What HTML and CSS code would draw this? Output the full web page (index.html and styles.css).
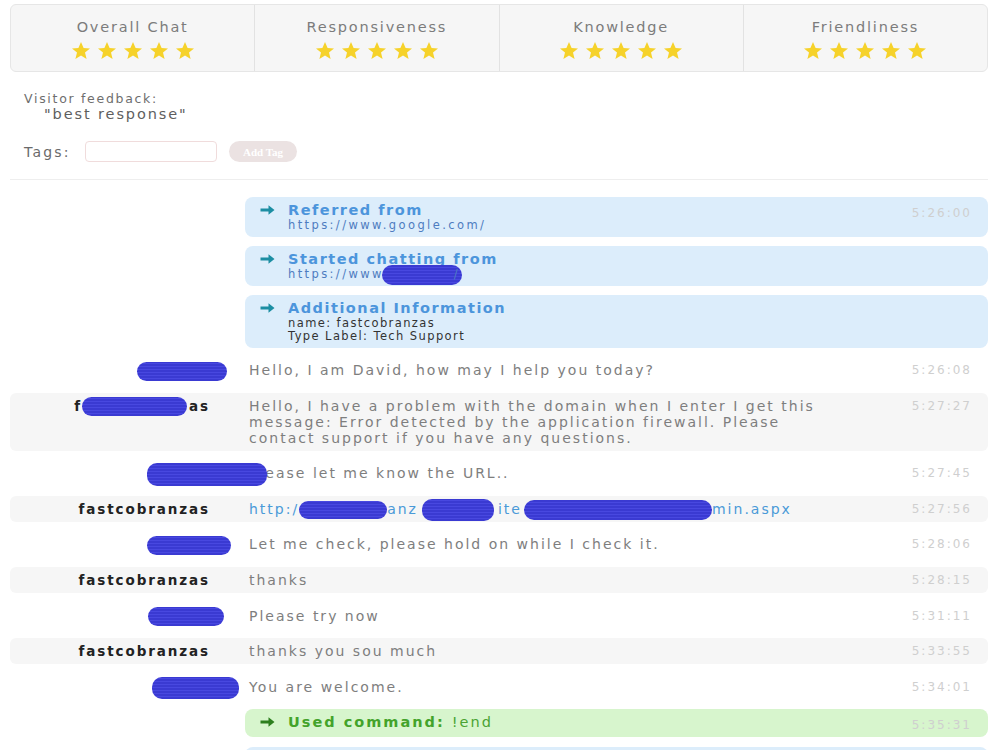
FILE: index.html
```html
<!DOCTYPE html>
<html lang="en">
  <head>
    <meta charset="UTF-8" />
    <meta name="viewport" content="width=device-width, initial-scale=1.0" />
    <title>Chat Transcript</title>
    <link rel="stylesheet" href="styles.css">
  </head>
  <body>
    <div class="page">
      <div class="ratings">
        <div class="rating">
          <div class="rating-title">Overall Chat</div>
          <div class="stars">
            <svg viewBox="0 0 20 20"><polygon points="10,1 12.6,7 19,7.4 14,11.6 15.6,18 10,14.5 4.4,18 6,11.6 1,7.4 7.4,7"/></svg>
            <svg viewBox="0 0 20 20"><polygon points="10,1 12.6,7 19,7.4 14,11.6 15.6,18 10,14.5 4.4,18 6,11.6 1,7.4 7.4,7"/></svg>
            <svg viewBox="0 0 20 20"><polygon points="10,1 12.6,7 19,7.4 14,11.6 15.6,18 10,14.5 4.4,18 6,11.6 1,7.4 7.4,7"/></svg>
            <svg viewBox="0 0 20 20"><polygon points="10,1 12.6,7 19,7.4 14,11.6 15.6,18 10,14.5 4.4,18 6,11.6 1,7.4 7.4,7"/></svg>
            <svg viewBox="0 0 20 20"><polygon points="10,1 12.6,7 19,7.4 14,11.6 15.6,18 10,14.5 4.4,18 6,11.6 1,7.4 7.4,7"/></svg>
          </div>
        </div>
        <div class="rating">
          <div class="rating-title">Responsiveness</div>
          <div class="stars">
            <svg viewBox="0 0 20 20"><polygon points="10,1 12.6,7 19,7.4 14,11.6 15.6,18 10,14.5 4.4,18 6,11.6 1,7.4 7.4,7"/></svg>
            <svg viewBox="0 0 20 20"><polygon points="10,1 12.6,7 19,7.4 14,11.6 15.6,18 10,14.5 4.4,18 6,11.6 1,7.4 7.4,7"/></svg>
            <svg viewBox="0 0 20 20"><polygon points="10,1 12.6,7 19,7.4 14,11.6 15.6,18 10,14.5 4.4,18 6,11.6 1,7.4 7.4,7"/></svg>
            <svg viewBox="0 0 20 20"><polygon points="10,1 12.6,7 19,7.4 14,11.6 15.6,18 10,14.5 4.4,18 6,11.6 1,7.4 7.4,7"/></svg>
            <svg viewBox="0 0 20 20"><polygon points="10,1 12.6,7 19,7.4 14,11.6 15.6,18 10,14.5 4.4,18 6,11.6 1,7.4 7.4,7"/></svg>
          </div>
        </div>
        <div class="rating">
          <div class="rating-title">Knowledge</div>
          <div class="stars">
            <svg viewBox="0 0 20 20"><polygon points="10,1 12.6,7 19,7.4 14,11.6 15.6,18 10,14.5 4.4,18 6,11.6 1,7.4 7.4,7"/></svg>
            <svg viewBox="0 0 20 20"><polygon points="10,1 12.6,7 19,7.4 14,11.6 15.6,18 10,14.5 4.4,18 6,11.6 1,7.4 7.4,7"/></svg>
            <svg viewBox="0 0 20 20"><polygon points="10,1 12.6,7 19,7.4 14,11.6 15.6,18 10,14.5 4.4,18 6,11.6 1,7.4 7.4,7"/></svg>
            <svg viewBox="0 0 20 20"><polygon points="10,1 12.6,7 19,7.4 14,11.6 15.6,18 10,14.5 4.4,18 6,11.6 1,7.4 7.4,7"/></svg>
            <svg viewBox="0 0 20 20"><polygon points="10,1 12.6,7 19,7.4 14,11.6 15.6,18 10,14.5 4.4,18 6,11.6 1,7.4 7.4,7"/></svg>
          </div>
        </div>
        <div class="rating">
          <div class="rating-title">Friendliness</div>
          <div class="stars">
            <svg viewBox="0 0 20 20"><polygon points="10,1 12.6,7 19,7.4 14,11.6 15.6,18 10,14.5 4.4,18 6,11.6 1,7.4 7.4,7"/></svg>
            <svg viewBox="0 0 20 20"><polygon points="10,1 12.6,7 19,7.4 14,11.6 15.6,18 10,14.5 4.4,18 6,11.6 1,7.4 7.4,7"/></svg>
            <svg viewBox="0 0 20 20"><polygon points="10,1 12.6,7 19,7.4 14,11.6 15.6,18 10,14.5 4.4,18 6,11.6 1,7.4 7.4,7"/></svg>
            <svg viewBox="0 0 20 20"><polygon points="10,1 12.6,7 19,7.4 14,11.6 15.6,18 10,14.5 4.4,18 6,11.6 1,7.4 7.4,7"/></svg>
            <svg viewBox="0 0 20 20"><polygon points="10,1 12.6,7 19,7.4 14,11.6 15.6,18 10,14.5 4.4,18 6,11.6 1,7.4 7.4,7"/></svg>
          </div>
        </div>
      </div>

      <div class="feedback">
        <div class="feedback-label">Visitor feedback:</div>
        <div class="feedback-text">"best response"</div>
      </div>

      <div class="tags">
        <label for="tag">Tags:</label>
        <input type="text" id="tag" />
        <button class="add-tag">Add Tag</button>
      </div>

      <div class="chat">
        <div class="info">
          <svg class="arrow" viewBox="0 0 16 12"><path d="M1 4.6h8V1.2l6 4.8-6 4.8V7.4H1z" /></svg>
          <div class="info-body">
            <div class="info-title">Referred from</div>
            <div class="info-line">https://www.google.com/</div>
          </div>
          <div class="time">5:26:00</div>
        </div>
        <div class="info">
          <svg class="arrow" viewBox="0 0 16 12"><path d="M1 4.6h8V1.2l6 4.8-6 4.8V7.4H1z" /></svg>
          <div class="info-body">
            <div class="info-title">Started chatting from</div>
            <div class="info-line">https://www<span class="blot blot-url"></span>/</div>
          </div>
          <div class="time"></div>
        </div>
        <div class="info">
          <svg class="arrow" viewBox="0 0 16 12"><path d="M1 4.6h8V1.2l6 4.8-6 4.8V7.4H1z" /></svg>
          <div class="info-body">
            <div class="info-title">Additional Information</div>
            <div class="info-line dark">name: fastcobranzas</div>
            <div class="info-line dark">Type Label: Tech Support</div>
          </div>
          <div class="time"></div>
        </div>

        <div class="msg">
          <div class="name"><span class="blot blot-a"></span></div>
          <div class="text">Hello, I am David, how may I help you today?</div>
          <div class="time">5:26:08</div>
        </div>
        <div class="msg visitor">
          <div class="name">f<span class="blot blot-v"></span>as</div>
          <div class="text">Hello, I have a problem with the domain when I enter I get this message: Error detected by the application firewall. Please contact support if you have any questions.</div>
          <div class="time">5:27:27</div>
        </div>
        <div class="msg">
          <div class="name"><span class="blot blot-b"></span></div>
          <div class="text">Please let me know the URL..</div>
          <div class="time">5:27:45</div>
        </div>
        <div class="msg visitor">
          <div class="name">fastcobranzas</div>
          <div class="text link">http:/<span class="blot blot-l1"></span>anz<span class="blot blot-l2"></span>ite<span class="blot blot-l3"></span>min.aspx</div>
          <div class="time">5:27:56</div>
        </div>
        <div class="msg">
          <div class="name"><span class="blot blot-c"></span></div>
          <div class="text">Let me check, please hold on while I check it.</div>
          <div class="time">5:28:06</div>
        </div>
        <div class="msg visitor">
          <div class="name">fastcobranzas</div>
          <div class="text">thanks</div>
          <div class="time">5:28:15</div>
        </div>
        <div class="msg">
          <div class="name"><span class="blot blot-d"></span></div>
          <div class="text">Please try now</div>
          <div class="time">5:31:11</div>
        </div>
        <div class="msg visitor">
          <div class="name">fastcobranzas</div>
          <div class="text">thanks you sou much</div>
          <div class="time">5:33:55</div>
        </div>
        <div class="msg">
          <div class="name"><span class="blot blot-e"></span></div>
          <div class="text">You are welcome.</div>
          <div class="time">5:34:01</div>
        </div>

        <div class="info command">
          <svg class="arrow" viewBox="0 0 16 12"><path d="M1 4.6h8V1.2l6 4.8-6 4.8V7.4H1z" /></svg>
          <div class="info-body">
            <div class="info-title">Used command: <span class="plain">!end</span></div>
          </div>
          <div class="time">5:35:31</div>
        </div>
        <div class="info last">
          <div class="info-body"></div>
        </div>
      </div>
    </div>
  </body>
</html>
```

FILE: styles.css
```css
body {
  margin: 0;
  font-family: "DejaVu Sans", "Liberation Sans", sans-serif;
  background-color: #ffffff;
  color: #7a7a7a;
}
.page {
  width: 978px;
  margin-left: 10px;
  padding-top: 4px;
}

/* ratings */
.ratings {
  display: flex;
  background-color: #f6f6f6;
  border: 1px solid #e6e6e6;
  border-radius: 6px;
  height: 66px;
}
.rating {
  flex: 1;
  text-align: center;
  border-left: 1px solid #e2e2e2;
  padding-top: 13px;
  box-sizing: border-box;
}
.rating:first-child {
  border-left: none;
}
.rating-title {
  font-size: 14.5px;
  letter-spacing: 1.8px;
  color: #7c7c7c;
  line-height: 18px;
}
.stars {
  display: flex;
  justify-content: center;
  gap: 6px;
  margin-top: 5px;
}
.stars svg {
  width: 20px;
  height: 20px;
  fill: #f6d22a;
}

/* feedback */
.feedback {
  margin-top: 19px;
  padding-left: 14px;
}
.feedback-label {
  font-size: 12.5px;
  line-height: 15px;
  color: #6e6e6e;
  letter-spacing: 1.7px;
}
.feedback-text {
  font-size: 14.5px;
  line-height: 16px;
  padding-left: 20px;
  color: #5e5e5e;
  letter-spacing: 1.9px;
}

.tags {
  display: flex;
  align-items: center;
  margin-top: 19px;
  padding-left: 14px;
  height: 21px;
}
.tags label {
  font-size: 14px;
  color: #6a6a6a;
  letter-spacing: 2.2px;
  width: 61px;
}
.tags input {
  width: 132px;
  height: 21px;
  box-sizing: border-box;
  border: 1px solid #f0dcdc;
  border-radius: 4px;
  padding: 0 4px;
}
.add-tag {
  margin-left: 12px;
  width: 68px;
  height: 21px;
  border: none;
  border-radius: 11px;
  background-color: #ebe2e2;
  color: #ffffff;
  font-family: "Liberation Serif", serif;
  font-weight: bold;
  font-size: 11px;
  padding: 0;
}

/* chat */
.chat {
  margin-top: 17px;
  border-top: 1px solid #eeeeee;
  padding-top: 17px;
}
.info {
  display: flex;
  align-items: flex-start;
  margin-left: 235px;
  background-color: #dcedfb;
  border-radius: 8px;
  padding: 5px 16px 5px 14px;
  margin-bottom: 9px;
}
.arrow {
  width: 17px;
  height: 12px;
  margin-top: 2px;
  margin-right: 12px;
  fill: #1c8ea3;
}
.info-body {
  flex: 1;
}
.info-title {
  font-weight: bold;
  font-size: 14.5px;
  line-height: 17px;
  color: #4c95dc;
  letter-spacing: 1.5px;
}
.info-line {
  font-size: 11.5px;
  line-height: 13px;
  color: #4e7cc0;
  letter-spacing: 2.4px;
}
.info-line.dark {
  color: #333;
  letter-spacing: 1.4px;
}
.info.last {
  height: 30px;
}
.command {
  background-color: #d7f5cd;
  margin-bottom: 10px;
}
.command .arrow {
  fill: #2d7f1e;
}
.command .info-title {
  color: #43a32a;
  letter-spacing: 2px;
}
.plain {
  font-weight: normal;
  color: #4aa333;
}

.msg {
  display: flex;
  align-items: flex-start;
  border-radius: 6px;
  padding: 5px 0;
  margin-bottom: 9.6px;
  line-height: 16px;
}
.msg.visitor {
  background-color: #f6f6f6;
}
.name {
  width: 200px;
  text-align: right;
  font-weight: bold;
  font-size: 13.5px;
  letter-spacing: 1.9px;
  color: #222;
  margin-right: 35px;
  flex-shrink: 0;
}
.text {
  flex: 1;
  font-size: 14px;
  letter-spacing: 2px;
  padding-left: 4px;
  padding-right: 60px;
  color: #7e7e7e;
}
.text.link {
  color: #4a9ad8;
}
.time {
  width: 80px;
  text-align: right;
  padding-right: 16px;
  font-size: 12px;
  letter-spacing: 2px;
  color: #cfcfcf;
  flex-shrink: 0;
}
.info .time {
  padding-right: 0;
  margin-top: 4px;
}

/* redaction marks */
.blot {
  display: inline-block;
  vertical-align: middle;
  height: 19px;
  margin: -5px 0;
  border-radius: 10px;
  background: repeating-linear-gradient(0deg, #3a3ad2 0 2px, #4848e0 2px 3px);
}
.blot-a { width: 90px; margin-right: -17px; }
.blot-v { width: 105px; margin-left: 0; margin-right: 2px; }
.blot-b { width: 120px; height: 23px; margin-right: -57px; position: relative; z-index: 1; }
.blot-c { width: 84px; margin-right: -21px; }
.blot-d { width: 76px; margin-right: -14px; }
.blot-e { width: 87px; height: 22px; margin-right: -29px; }
.blot-url { width: 80px; height: 20px; margin-left: -2px; margin-right: -8px; }
.blot-l1 { width: 88px; height: 18px; }
.blot-l2 { width: 72px; height: 22px; margin-left: 4px; margin-right: 4px; }
.blot-l3 { width: 188px; height: 20px; margin-left: 2px; }
```
